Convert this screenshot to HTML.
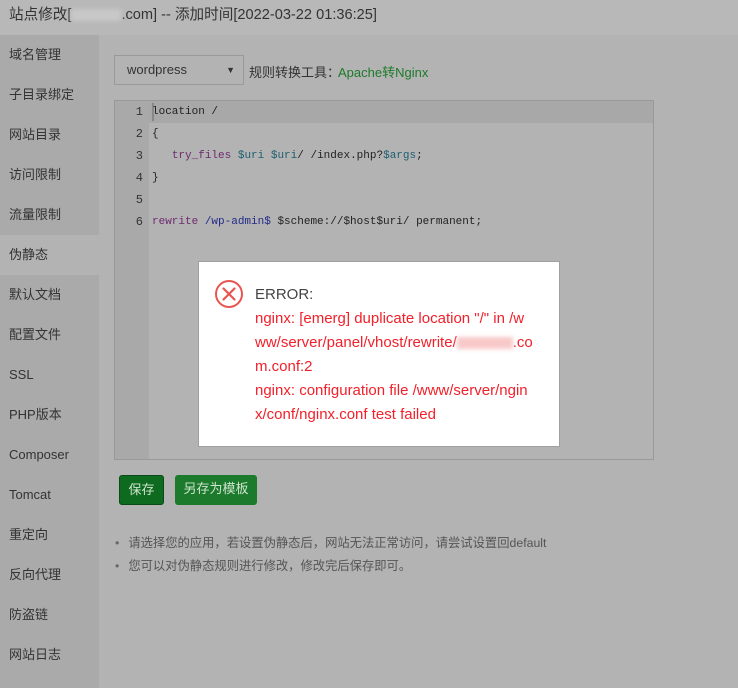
<!DOCTYPE html>
<html><head><meta charset="utf-8"><style>
*{margin:0;padding:0;box-sizing:border-box}
body{width:738px;height:688px;overflow:hidden;background:#b3b3b3;font-family:"Liberation Sans","Noto Sans CJK SC",sans-serif;position:relative;color:#333}
.hdr{position:absolute;left:0;top:0;width:738px;height:35px;background:#b8b8b8;font-size:14.6px;line-height:30px;padding-left:9px;color:#333}
.blur{display:inline-block;width:50px;height:12px;background:#c8c8c8;filter:blur(2px);vertical-align:middle}
.side{position:absolute;left:0;top:35px;width:99px;height:653px;background:#aaaaaa}
.side div{height:40px;line-height:40px;padding-left:9px;font-size:13px;color:#333}
.side .act{background:#b3b3b3}
.sel{position:absolute;left:114px;top:55px;width:130px;height:30px;border:1px solid #999;background:#b3b3b3;font-size:13px;line-height:28px;padding-left:12px;color:#333}
.sel span{position:absolute;right:8px;top:0;font-size:9px}
.tool{position:absolute;left:249px;top:62px;font-size:13px;color:#333}
.tool b{font-weight:normal;color:#1d7a2a;margin-left:-2px}
.ed{position:absolute;left:114px;top:100px;width:540px;height:360px;border:1px solid #999;background:#b3b3b3}
.gut{position:absolute;left:0;top:0;width:34px;height:358px;background:#a9a9a9}
.hl{position:absolute;left:0;top:0;width:538px;height:22px;background:#a8a8a8}
.ln{position:absolute;left:0;width:28px;text-align:right;font-size:12px;color:#333;font-family:"Liberation Mono",monospace}
.cd{position:absolute;left:37px;font-size:11px;font-family:"Liberation Mono",monospace;color:#222;white-space:pre}
.k{color:#6e2a6e}.v{color:#1e5f70}.s{color:#222a88}
.btn{position:absolute;top:475px;height:30px;line-height:28px;color:#cfe3cf;font-size:13px;border-radius:3px;text-align:center}
.tips{position:absolute;left:115px;top:532px;font-size:12.3px;color:#555;line-height:23px}
.tips div:before{content:"•";color:#666;margin-right:9px}
.dlg{position:absolute;left:198px;top:261px;width:362px;height:186px;background:#fff;border:1px solid #a0a0a0}
.dlg .t{position:absolute;left:56px;top:21px;font-size:15px;line-height:24px;color:#f2202a;white-space:nowrap}
.dlg .t .e{color:#444}
.rb{display:inline-block;width:56px;height:12px;background:#f8c8c8;filter:blur(2px);vertical-align:middle}
</style></head><body>
<div class="hdr">站点修改[<span class="blur"></span>.com] -- 添加时间[2022-03-22 01:36:25]</div>
<div class="side">
<div>域名管理</div><div>子目录绑定</div><div>网站目录</div><div>访问限制</div><div>流量限制</div><div class="act">伪静态</div><div>默认文档</div><div>配置文件</div><div>SSL</div><div>PHP版本</div><div>Composer</div><div>Tomcat</div><div>重定向</div><div>反向代理</div><div>防盗链</div><div>网站日志</div>
</div>
<div class="sel">wordpress<span>▼</span></div>
<div class="tool">规则转换工具：<b>Apache转Nginx</b></div>
<div class="ed">
<div class="hl"></div><div class="gut"></div>
<div class="hl" style="left:34px;width:504px"></div>
<div style="position:absolute;left:37px;top:2px;width:2px;height:18px;background:#888"></div>
<div class="ln" style="top:4px">1</div><div class="ln" style="top:26px">2</div><div class="ln" style="top:48px">3</div><div class="ln" style="top:70px">4</div><div class="ln" style="top:92px">5</div><div class="ln" style="top:114px">6</div>
<div class="cd" style="top:5px">location /</div>
<div class="cd" style="top:27px">{</div>
<div class="cd" style="top:49px">   <span class="k">try_files</span> <span class="v">$uri</span> <span class="v">$uri</span>/ /index.php?<span class="v">$args</span>;</div>
<div class="cd" style="top:71px">}</div>
<div class="cd" style="top:115px"><span class="k">rewrite</span> <span class="s">/wp-admin$</span> $scheme://$host$uri/ permanent;</div>
</div>
<div class="btn" style="left:119px;width:45px;background:#0e6a1e;border:1px solid #0a4a14">保存</div>
<div class="btn" style="left:175px;width:82px;background:#1b7a2b">另存为模板</div>
<div class="tips"><div>请选择您的应用，若设置伪静态后，网站无法正常访问，请尝试设置回default</div><div>您可以对伪静态规则进行修改，修改完后保存即可。</div></div>
<div class="dlg">
<svg style="position:absolute;left:15px;top:17px" width="30" height="30" viewBox="0 0 30 30"><circle cx="15" cy="15" r="13" fill="none" stroke="#e8554e" stroke-width="2"/><path d="M9.5 9.5L20.5 20.5M20.5 9.5L9.5 20.5" stroke="#e8554e" stroke-width="2.2" stroke-linecap="round"/></svg>
<div class="t"><div class="e">ERROR:</div>nginx: [emerg] duplicate location "/" in /w<br>ww/server/panel/vhost/rewrite/<span class="rb"></span>.co<br>m.conf:2<br>nginx: configuration file /www/server/ngin<br>x/conf/nginx.conf test failed</div>
</div>
</body></html>
